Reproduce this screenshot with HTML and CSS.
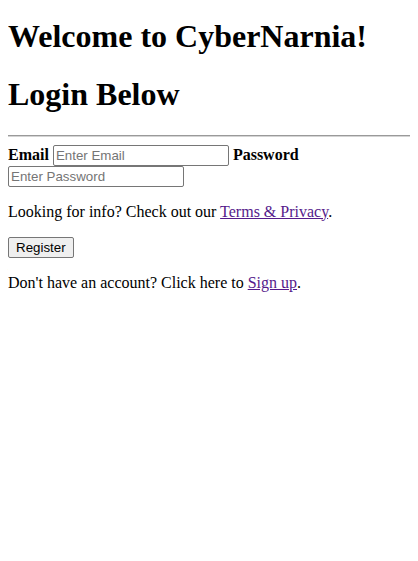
FILE: index.html
```html
<!DOCTYPE html>
<html>
<head>
<meta charset="utf-8">
<title>CyberNarnia</title>
<link rel="stylesheet" href="styles.css">
</head>
<body>
<h1 class="title title-first">Welcome to CyberNarnia!</h1>
<h1 class="title">Login Below</h1>
<form class="login">
<div class="rule-wrap"><hr class="rule"></div>
<label class="field-label" for="email">Email</label>
<input class="field" type="text" id="email" placeholder="Enter Email">
<label class="field-label" for="psw">Password</label>
<input class="field" type="password" id="psw" placeholder="Enter Password">
<p class="note">Looking for info? Check out our <a class="link" href="#">Terms &amp; Privacy</a>.</p>
<button class="btn" type="button">Register</button>
<p class="note">Don't have an account? Click here to <a class="link" href="#">Sign up</a>.</p>
</form>
</body>
</html>
```
FILE: styles.css
```css
html {
  overflow-x: hidden;
  scrollbar-width: none;
}
html::-webkit-scrollbar {
  width: 0;
  height: 0;
  display: none;
}
body {
  margin: 8px;
  font-family: "Liberation Serif", "Times New Roman", serif;
  font-size: 16px;
  color: #000;
  background: #fff;
}
.title {
  font-size: 32px;
  margin: 21.5px 0;
  font-weight: bold;
}
.title-first {
  margin-top: 9.5px;
}
.rule-wrap {
  margin: 8px -24px 8px 0;
}
.rule {
  display: block;
  height: 2px;
  margin: 0;
  border: none;
  background: linear-gradient(#9a9a9a 50%, #d4d4d4 50%);
}
.field-label {
  font-weight: bold;
}
.field {
  box-sizing: border-box;
  font-family: "Liberation Sans", Arial, sans-serif;
  font-size: 13.33px;
  height: 21px;
  width: 176px;
  padding: 1px 2px;
  border: 1px solid #767676;
  border-radius: 2px;
  margin: 0;
}
.field::placeholder {
  color: #757575;
}
.note {
  margin: 16px 0;
}
.link {
  color: #551a8b;
}
.btn {
  box-sizing: border-box;
  font-family: "Liberation Sans", Arial, sans-serif;
  font-size: 13.33px;
  height: 21px;
  padding: 1px 7px;
  margin: 0;
  border: 1px solid #767676;
  border-radius: 2px;
  background: #efefef;
  color: #000;
}
```
